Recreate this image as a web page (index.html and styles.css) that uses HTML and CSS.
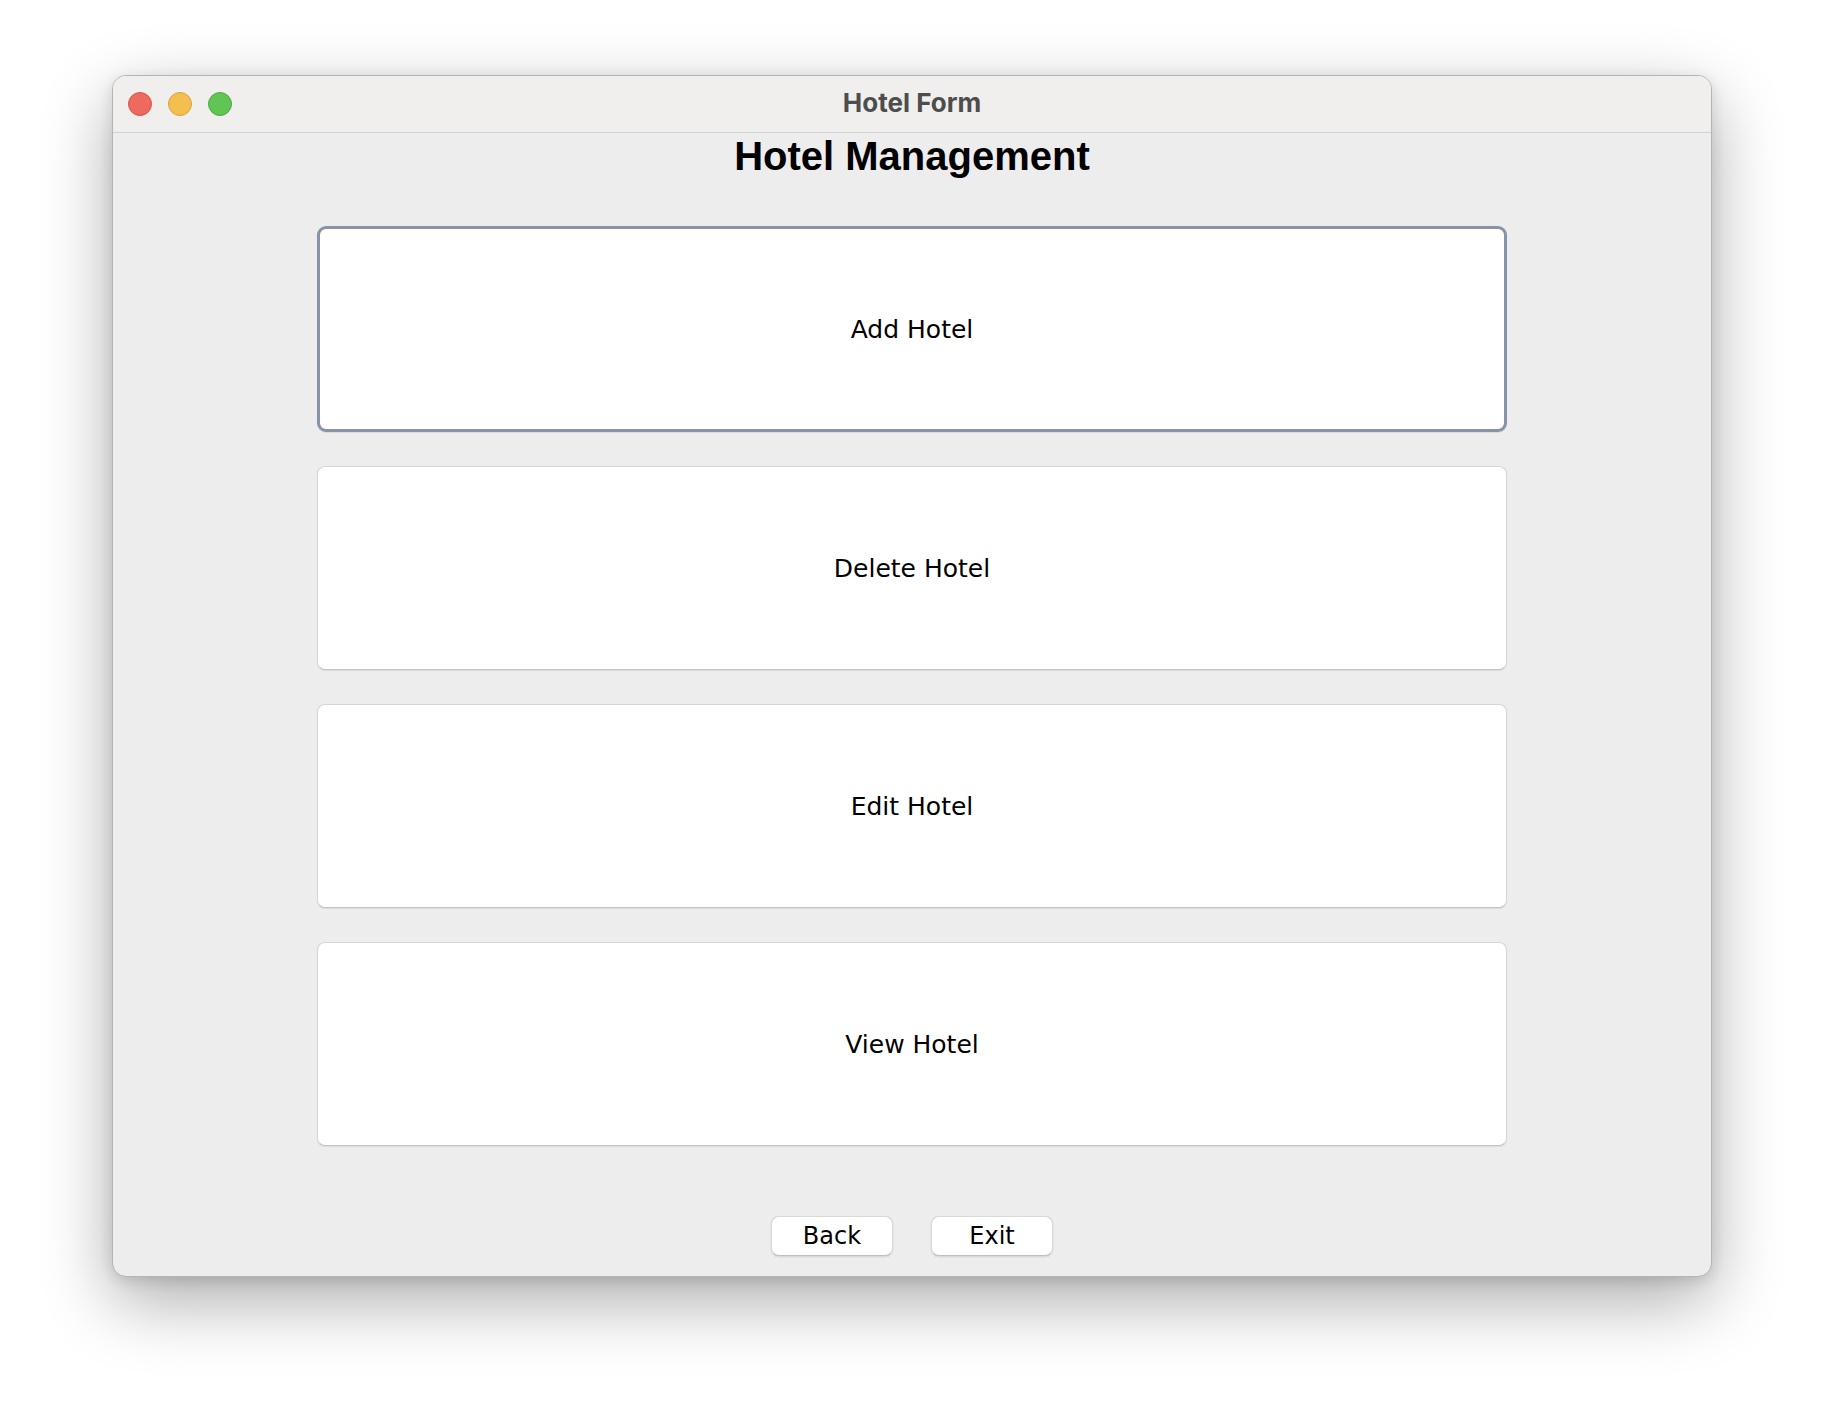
FILE: index.html
```html
<!DOCTYPE html>
<html>
<head>
<meta charset="utf-8">
<title>Hotel Form</title>
<link rel="stylesheet" href="styles.css">
</head>
<body>
<div class="window">
  <div class="titlebar">
    <div class="lights">
      <span class="light red"></span>
      <span class="light yellow"></span>
      <span class="light green"></span>
    </div>
    <div class="title">Hotel Form</div>
  </div>
  <div class="content">
    <h1 class="heading">Hotel Management</h1>
    <div class="cards">
      <button class="card focused">Add Hotel</button>
      <button class="card">Delete Hotel</button>
      <button class="card">Edit Hotel</button>
      <button class="card">View Hotel</button>
    </div>
    <div class="actions">
      <button class="btn">Back</button>
      <button class="btn">Exit</button>
    </div>
  </div>
</div>
</body>
</html>
```
FILE: styles.css
```css
html, body {
  margin: 0;
  padding: 0;
  background: #ffffff;
}
body {
  width: 1824px;
  height: 1424px;
  overflow: hidden;
}
.window {
  margin-left: 112px;
  margin-top: 75px;
  width: 1600px;
  height: 1202px;
  box-sizing: border-box;
  border: 1px solid #b4b4b4;
  border-radius: 14px;
  background: #ededed;
  box-shadow: 0 24px 70px rgba(0, 0, 0, 0.33), 0 4px 14px rgba(0, 0, 0, 0.12);
  overflow: hidden;
  display: flex;
  flex-direction: column;
}
.titlebar {
  height: 57px;
  flex: none;
  box-sizing: border-box;
  padding-bottom: 4px;
  background: #f0efee;
  border-bottom: 1px solid #d1d1d1;
  display: flex;
  align-items: center;
  justify-content: center;
  position: relative;
}
.lights {
  position: absolute;
  left: 15px;
  top: 16px;
  display: flex;
  gap: 16px;
}
.light {
  width: 24px;
  height: 24px;
  border-radius: 50%;
  box-sizing: border-box;
}
.red { background: #ee6a5e; border: 1px solid #d55449; }
.yellow { background: #f5bf4f; border: 1px solid #d9a13b; }
.green { background: #61c554; border: 1px solid #4ea842; }
.title {
  font-family: Inter, "Liberation Sans", sans-serif;
  font-weight: 700;
  font-size: 26px;
  color: #4d4d4d;
}
.content {
  flex: 1;
  display: flex;
  flex-direction: column;
  align-items: center;
}
.heading {
  margin: 0;
  font-family: "Liberation Sans", Arial, sans-serif;
  font-weight: bold;
  font-size: 40px;
  line-height: 46px;
  color: #000;
}
.cards {
  margin-top: 47px;
  width: 1190px;
  display: flex;
  flex-direction: column;
  gap: 34px;
}
.card {
  height: 204px;
  box-sizing: border-box;
  background: #ffffff;
  border: 1px solid #d6d6d6;
  border-bottom-color: #c4c4c4;
  border-radius: 8px;
  box-shadow: 0 1px 1px rgba(0, 0, 0, 0.08);
  font-family: "DejaVu Sans", Verdana, sans-serif;
  font-size: 25px;
  color: #000;
  padding: 0;
  margin: 0;
}
.card.focused {
  height: 206px;
  border: 3px solid #8693a9;
  border-radius: 9px;
}
.actions {
  margin-top: 70px;
  display: flex;
  gap: 38px;
}
.btn {
  width: 122px;
  height: 40px;
  box-sizing: border-box;
  background: #ffffff;
  border: 1px solid #d8d8d8;
  border-bottom-color: #c0c0c0;
  border-radius: 8px;
  box-shadow: 0 1px 2px rgba(0, 0, 0, 0.12);
  font-family: "DejaVu Sans", Verdana, sans-serif;
  font-size: 24px;
  color: #000;
  padding: 0;
  margin: 0;
}
```
